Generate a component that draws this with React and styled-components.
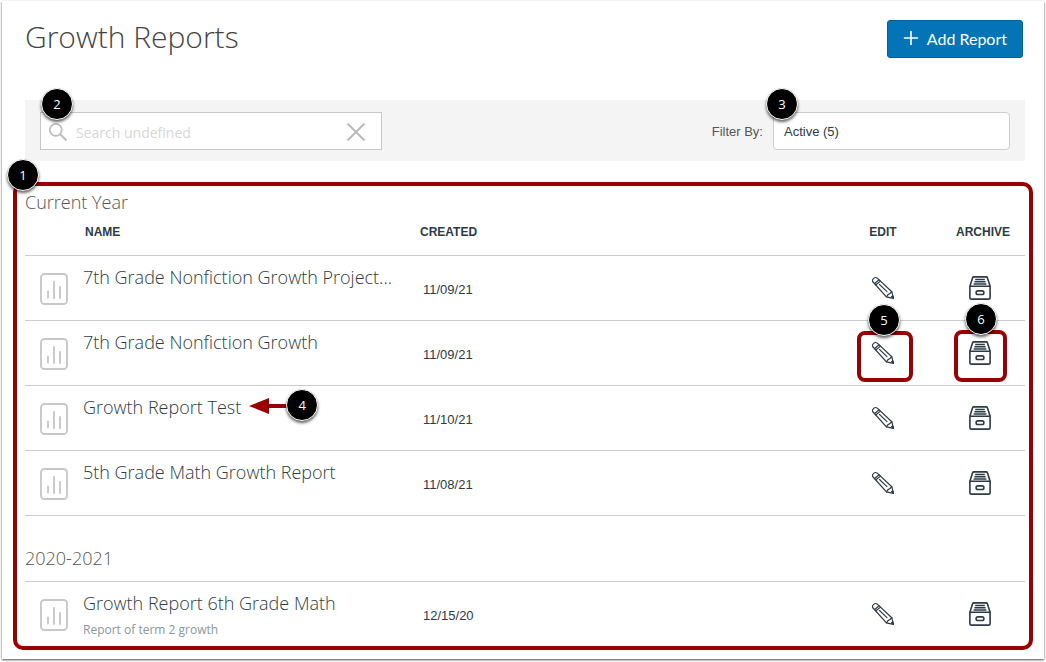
import React from "react";
import styled, { createGlobalStyle, css } from "styled-components";

const GlobalStyle = createGlobalStyle`
  * { box-sizing: border-box; }
  body {
    margin: 0;
    background: #fff;
    color: #2d3b45;
    font-family: "Liberation Sans", Arial, sans-serif;
    font-size: 13px;
  }
`;

const light = css`
  font-family: "Open Sans", "Noto Sans", sans-serif;
  font-weight: 300;
`;

const Page = styled.main`
  margin: 1px 2px 3px;
  padding: 19px 19px 9px 23px;
  background: #fff;
  box-shadow: 0 1px 2px rgba(0, 0, 0, 0.7);
`;

const Header = styled.header`
  display: flex;
  align-items: flex-start;
  justify-content: space-between;
  padding-right: 2px;
  margin-bottom: 42px;
`;

const Title = styled.h1`
  ${light}
  margin: 0;
  font-size: 30px;
  line-height: 34px;
  color: #444;
`;

const AddButton = styled.button`
  display: flex;
  align-items: center;
  gap: 8px;
  height: 38px;
  padding: 0 15px 2px;
  border: 1px solid #06609a;
  border-radius: 3px;
  background: #0374b5;
  color: #fff;
  font-family: Lato, sans-serif;
  font-size: 16px;
`;

const FilterBar = styled.div`
  display: flex;
  align-items: flex-start;
  justify-content: space-between;
  padding: 12px 15px 11px;
  background: #f4f4f4;
`;

const SearchBox = styled.div`
  position: relative;
  display: flex;
  align-items: center;
  width: 342px;
  height: 38px;
  padding: 2px 15px 0 7px;
  border: 1px solid #c7c7c7;
  background: #fff;
`;

const SearchInput = styled.input`
  flex: 1;
  min-width: 0;
  height: 34px;
  padding: 0 8px;
  border: 0;
  outline: 0;
  background: transparent;
  font-family: "Open Sans", "Noto Sans", sans-serif;
  font-size: 14px;
  &::placeholder { color: #d6d6d6; opacity: 1; }
`;

const IconButton = styled.button`
  display: inline-flex;
  padding: 0;
  border: 0;
  background: none;
  color: #2d3b45;
`;

const Filter = styled.div`
  display: flex;
  align-items: center;
  gap: 10px;
  color: #555;
`;

const SelectWrap = styled.div`
  position: relative;
`;

const Select = styled.select`
  display: block;
  appearance: none;
  width: 237px;
  height: 38px;
  padding: 0 10px;
  border: 1px solid #c7cdd1;
  border-radius: 4px;
  background: #fff;
  color: #2d3b45;
  font-family: inherit;
  font-size: 13px;
`;

const Reports = styled.section`
  position: relative;
  margin: 21px -8px 0 -12px;
  padding: 4px 4px 0 8px;
  border: 4px solid #900;
  border-radius: 10px;
`;

const YearHeading = styled.h2`
  ${light}
  margin: ${(p) => (p.$spaced ? "30px 0 11px" : "0")};
  font-size: 18px;
  line-height: 24px;
  color: #555;
`;

const Table = styled.table`
  width: 100%;
  table-layout: fixed;
  border-collapse: separate;
  border-spacing: 0;
  border-bottom: ${(p) => (p.$closed ? "1px solid #c7cdd1" : "0")};
`;

const HeadCell = styled.th`
  height: 41px;
  padding: 0 0 6px ${(p) => p.$inset || 0}px;
  font-size: 12px;
  line-height: 16px;
  text-align: ${(p) => (p.$center ? "center" : "left")};
`;

const Cell = styled.td`
  height: 65px;
  padding: ${(p) => (p.$center ? "2px 0 0" : "0 3px")};
  border-top: 1px solid #c7cdd1;
  text-align: ${(p) => (p.$center ? "center" : "left")};
  vertical-align: middle;
`;

const ThumbCell = styled(Cell)`
  padding: 2px 0 0 15px;
  svg { display: block; }
`;

const NameCell = styled(Cell)`
  padding-top: 9px;
  vertical-align: top;
  white-space: nowrap;
`;

const DateCell = styled(Cell)`
  padding-top: 3px;
`;

const NameLink = styled.a`
  ${light}
  position: relative;
  display: inline-block;
  font-size: 18px;
  line-height: 24px;
  color: #2d3b45;
  text-decoration: none;
`;

const Description = styled.p`
  margin: 7px 0 0;
  font-family: "Open Sans", "Noto Sans", sans-serif;
  font-size: 12px;
  line-height: 16px;
  color: #8b969e;
`;

const Action = styled.div`
  position: relative;
  display: inline-flex;
`;

const Callout = styled.span`
  position: absolute;
  z-index: 2;
  top: ${(p) => p.$top}px;
  left: ${(p) => p.$left};
  display: flex;
  align-items: center;
  justify-content: center;
  width: 32px;
  height: 32px;
  border: 1px solid #fff;
  border-radius: 50%;
  background: #000;
  color: #fff;
  font-family: "Open Sans", "Noto Sans", sans-serif;
  font-size: 13px;
  font-weight: 400;
  line-height: 16px;
  box-shadow: 0 2px 3px rgba(0, 0, 0, 0.6);
`;

const Outline = styled.span`
  position: absolute;
  inset: ${(p) => p.$inset};
  border: 4px solid #900;
  border-radius: 8px;
  pointer-events: none;
`;

const Arrow = styled.svg`
  position: absolute;
  top: 3px;
  left: calc(100% + 8px);
`;

const PlusIcon = () => (
  <svg width="16" height="16" viewBox="0 0 16 16" stroke="#fff" strokeWidth="1.6" strokeLinecap="round" aria-hidden="true">
    <path d="M8 1.5v13M1.5 8h13" />
  </svg>
);

const SearchIcon = () => (
  <svg width="20" height="20" viewBox="0 0 20 20" fill="none" stroke="#bdbdbd" strokeWidth="1.7" aria-hidden="true">
    <circle cx="7.8" cy="7.8" r="6" />
    <path d="M12 12l6.5 6.5" strokeWidth="2" />
  </svg>
);

const ClearIcon = () => (
  <svg width="20" height="20" viewBox="0 0 20 20" fill="none" stroke="#b8b8b8" strokeWidth="1.8" aria-hidden="true">
    <path d="M1.5 1.5l17 17M18.5 1.5l-17 17" />
  </svg>
);

const ChartIcon = () => (
  <svg width="28" height="32" viewBox="0 0 28 32" fill="none" stroke="#c8c8c8" aria-hidden="true">
    <rect x="1" y="1" width="26" height="30" rx="3.5" strokeWidth="1.9" />
    <path d="M8 18.5v6M14 9v16M20 14v11" strokeWidth="1.9" strokeLinecap="round" />
  </svg>
);

const PencilIcon = () => (
  <svg width="24" height="24" viewBox="0 0 24 24" fill="none" stroke="#2d3b45" strokeWidth="1.2" strokeLinejoin="round" strokeLinecap="round" aria-hidden="true">
    <path d="M1.6 5.5Q.9 3.9 2.6 2.4 4.4.9 6 1.9L20.8 15.7 22.4 22.4 15.4 20.8Z" />
    <path d="M3.7 7.5 8.1 3.8M5 8.8 9.5 5.1M15.4 20.8 17 18.6 18.6 17.8 20.8 15.7" />
    <path d="M8.5 8.5 16 15.6" strokeWidth="1.1" />
    <path d="M20.6 20.6l1.8 1.8-.4-2.2z" fill="#2d3b45" />
  </svg>
);

const ArchiveIcon = () => (
  <svg width="22" height="24" viewBox="0 0 22 24" fill="none" stroke="#2d3b45" strokeWidth="1.6" strokeLinejoin="round" aria-hidden="true">
    <path d="M.9 10.3h20.2v11.1q0 1.7-1.7 1.7H2.6q-1.7 0-1.7-1.7z" />
    <path d="M.9 10.3 3.6 1.8Q3.9.9 4.9.9h12.2q1 0 1.3.9l2.7 8.5" />
    <path d="M6.2 3.5h9.6M5.4 5.8h11.2M4.6 8.1h12.8" strokeWidth="1.5" />
    <rect x="7.1" y="14.9" width="7.8" height="3.6" rx="1.8" />
  </svg>
);

const currentYear = [
  { name: "7th Grade Nonfiction Growth Project...", created: "11/09/21" },
  { name: "7th Grade Nonfiction Growth", created: "11/09/21", outlined: true },
  { name: "Growth Report Test", created: "11/10/21", pointed: true },
  { name: "5th Grade Math Growth Report", created: "11/08/21" },
];

const previousYear = [
  { name: "Growth Report 6th Grade Math", description: "Report of term 2 growth", created: "12/15/20" },
];

function Columns() {
  return (
    <colgroup>
      <col style={{ width: "55px" }} />
      <col style={{ width: "34%" }} />
      <col />
      <col style={{ width: "104px" }} />
      <col style={{ width: "90px" }} />
    </colgroup>
  );
}

function ReportRow({ report }) {
  const { name, description, created, outlined, pointed } = report;
  return (
    <tr>
      <ThumbCell><ChartIcon /></ThumbCell>
      <NameCell>
        <NameLink href="#">
          {name}
          {pointed && (
            <>
              <Arrow width="40" height="16" viewBox="0 0 40 16" fill="#900" aria-hidden="true">
                <path d="M0 8 20 0v6h20v4H20v6z" />
              </Arrow>
              <Callout $top={-6} $left="calc(100% + 45px)">4</Callout>
            </>
          )}
        </NameLink>
        {description && <Description>{description}</Description>}
      </NameCell>
      <DateCell>{created}</DateCell>
      <Cell $center>
        <Action>
          <IconButton aria-label={`Edit ${name}`}><PencilIcon /></IconButton>
          {outlined && (
            <>
              <Outline $inset="-10px -18px -17px -14px" />
              <Callout $top={-37} $left="-3px">5</Callout>
            </>
          )}
        </Action>
      </Cell>
      <Cell $center>
        <Action>
          <IconButton aria-label={`Archive ${name}`}><ArchiveIcon /></IconButton>
          {outlined && (
            <>
              <Outline $inset="-11px -16px -17px -15px" />
              <Callout $top={-38} $left="-4px">6</Callout>
            </>
          )}
        </Action>
      </Cell>
    </tr>
  );
}

export default function App() {
  return (
    <>
      <GlobalStyle />
      <Page>
        <Header>
          <Title>Growth Reports</Title>
          <AddButton><PlusIcon />Add Report</AddButton>
        </Header>
        <FilterBar>
          <SearchBox>
            <SearchIcon />
            <SearchInput type="text" aria-label="Search reports" placeholder="Search undefined" />
            <IconButton aria-label="Clear search"><ClearIcon /></IconButton>
            <Callout $top={-25} $left="0px">2</Callout>
          </SearchBox>
          <Filter>
            <label htmlFor="status">Filter By:</label>
            <SelectWrap>
              <Select id="status" defaultValue="active">
                <option value="active">Active (5)</option>
              </Select>
              <Callout $top={-24} $left="-7px">3</Callout>
            </SelectWrap>
          </Filter>
        </FilterBar>
        <Reports>
          <Callout $top={-27} $left="-10px">1</Callout>
          <YearHeading>Current Year</YearHeading>
          <Table $closed>
            <Columns />
            <thead>
              <tr>
                <HeadCell aria-label="Type" />
                <HeadCell $inset={5}>NAME</HeadCell>
                <HeadCell>CREATED</HeadCell>
                <HeadCell $center>EDIT</HeadCell>
                <HeadCell $center $inset={6}>ARCHIVE</HeadCell>
              </tr>
            </thead>
            <tbody>
              {currentYear.map((r) => <ReportRow key={r.name} report={r} />)}
            </tbody>
          </Table>
          <YearHeading $spaced>2020-2021</YearHeading>
          <Table aria-label="2020-2021 reports">
            <Columns />
            <tbody>
              {previousYear.map((r) => <ReportRow key={r.name} report={r} />)}
            </tbody>
          </Table>
        </Reports>
      </Page>
    </>
  );
}
